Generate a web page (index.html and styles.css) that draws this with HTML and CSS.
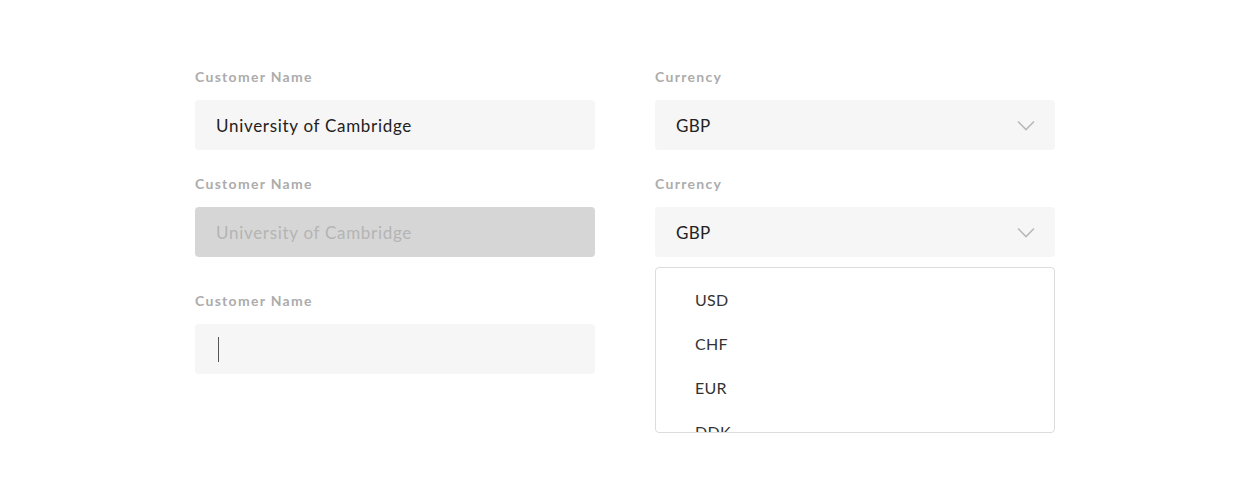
FILE: index.html
```html
<!DOCTYPE html>
<html lang="en">
<head>
<meta charset="utf-8">
<title>Form fields</title>
<link rel="stylesheet" href="styles.css">
</head>
<body>
<main class="form">
  <div class="col">
    <div class="field">
      <label class="label">Customer Name</label>
      <div class="input">University of Cambridge</div>
    </div>
    <div class="field field-2">
      <label class="label">Customer Name</label>
      <div class="input input-disabled">University of Cambridge</div>
    </div>
    <div class="field field-3">
      <label class="label">Customer Name</label>
      <div class="input input-focus"><span class="caret"></span></div>
    </div>
  </div>
  <div class="col">
    <div class="field">
      <label class="label">Currency</label>
      <div class="input select">
        <span class="code">GBP</span>
        <svg class="chev" width="18" height="11" viewBox="0 0 18 11"><path d="M1 1.5 L9 9.5 L17 1.5" fill="none" stroke="#b9b9b9" stroke-width="1.6"/></svg>
      </div>
    </div>
    <div class="field field-2">
      <label class="label">Currency</label>
      <div class="input select">
        <span class="code">GBP</span>
        <svg class="chev" width="18" height="11" viewBox="0 0 18 11"><path d="M1 1.5 L9 9.5 L17 1.5" fill="none" stroke="#b9b9b9" stroke-width="1.6"/></svg>
      </div>
      <ul class="menu">
        <li>USD</li>
        <li>CHF</li>
        <li>EUR</li>
        <li>DDK</li>
      </ul>
    </div>
  </div>
</main>
</body>
</html>
```
FILE: styles.css
```css
* { box-sizing: border-box; }
body {
  margin: 0;
  background: #ffffff;
  font-family: "Lato", "Liberation Sans", sans-serif;
}
.form {
  display: grid;
  grid-template-columns: 400px 400px;
  column-gap: 60px;
  justify-content: center;
  padding-top: 69px;
}
.col { display: flex; flex-direction: column; }
.label {
  display: block;
  height: 16px;
  line-height: 16px;
  font-size: 14px;
  font-weight: 700;
  color: #acacac;
  letter-spacing: 1.3px;
  margin-bottom: 15px;
}
.field-2 { margin-top: 26px; }
.field-3 { margin-top: 36px; }
.input {
  height: 50px;
  background: #f6f6f6;
  border-radius: 4px;
  padding: 0 21px;
  display: flex;
  align-items: center;
  font-size: 17px;
  color: #222222;
  letter-spacing: 0.7px;
}
.input-disabled {
  background: #d6d6d6;
  color: #b4b4b4;
}
.caret {
  display: block;
  width: 1px;
  height: 25px;
  background: #555;
  margin-left: 2px;
}
.select { justify-content: space-between; }
.code { letter-spacing: 0.3px; }
.chev { margin-right: -1px; }
.menu {
  list-style: none;
  margin: 10px 0 0;
  padding: 10px 0 0 39px;
  height: 166px;
  overflow: hidden;
  border: 1px solid #dcdcdc;
  border-radius: 4px;
  background: #fff;
}
.menu li {
  height: 44px;
  line-height: 44px;
  font-size: 16px;
  color: #333333;
  letter-spacing: 0.3px;
}
```
